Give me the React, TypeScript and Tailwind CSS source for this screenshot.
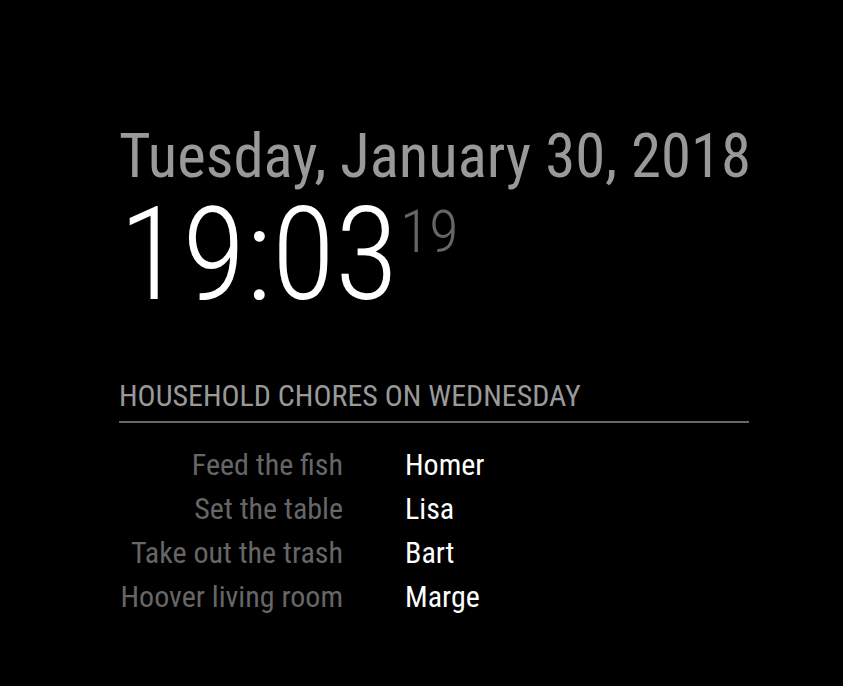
import React from "react";

const chores = [
  { task: "Feed the fish", who: "Homer" },
  { task: "Set the table", who: "Lisa" },
  { task: "Take out the trash", who: "Bart" },
  { task: "Hoover living room", who: "Marge" },
];

export default function App() {
  return (
    <div className="min-h-screen bg-black font-['Roboto_Condensed',sans-serif] pl-[119px] pt-[127px]">
      <div className="w-[630px]">
        <div className="text-[60.8px] leading-[60px] font-normal text-[#999] whitespace-nowrap">
          Tuesday, January 30, 2018
        </div>
        <div className="flex items-start mt-[3px]">
          <span className="text-[130px] leading-[130px] font-light text-white">19:03</span>
          <span className="text-[60px] leading-[60px] font-light text-[#666] mt-[12px] ml-[2px]">19</span>
        </div>
        <div className="mt-[61px] text-[30px] leading-[30px] pb-[10px] border-b-2 border-[#666] text-[#999] uppercase">
          Household chores on Wednesday
        </div>
        <div className="mt-[20px] grid grid-cols-[224px_auto] gap-x-[62px] justify-start text-[30px] leading-[44px]">
          {chores.map((c) => (
            <React.Fragment key={c.task}>
              <div className="text-right font-normal text-[#666] whitespace-nowrap">{c.task}</div>
              <div className="text-white font-normal">{c.who}</div>
            </React.Fragment>
          ))}
        </div>
      </div>
    </div>
  );
}
